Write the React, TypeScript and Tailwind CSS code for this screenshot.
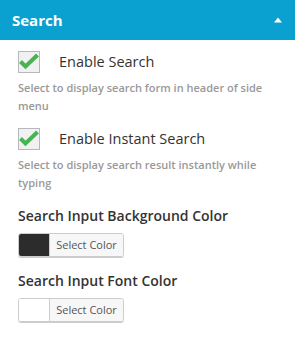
import React from "react";

function Check() {
  return (
    <div className="relative w-[22px] h-[22px] border border-[#b4b9be] bg-[#f1f1f1] shrink-0">
      <svg width="22" height="22" viewBox="0 0 22 22" className="absolute left-[-1px] top-[-1px] overflow-visible">
        <path d="M2.5 10.5 L7.5 15.5 L19.5 4" fill="none" stroke="#46b450" strokeWidth="4" strokeLinecap="butt" strokeLinejoin="miter" />
      </svg>
    </div>
  );
}

function ColorButton({ color }: { color: string }) {
  return (
    <div className="flex h-[24px] w-[106px] border border-[#cccccc] rounded-[3px] overflow-hidden shadow-[0_1px_0_#cccccc]">
      <div className="w-[31px] h-full border-r border-[#cccccc]" style={{ backgroundColor: color }} />
      <div className="flex-1 bg-[#f7f7f7] flex items-center justify-center text-[11px] text-[#555555]">Select Color</div>
    </div>
  );
}

export default function App() {
  return (
    <div className="w-[295px] h-[345px] bg-white font-['Open_Sans',sans-serif]">
      <div className="h-[40px] bg-[#0aa0cf] flex items-center justify-between pl-[12px] pr-[13px]">
        <span className="text-white font-bold text-[15px]">Search</span>
        <svg width="8" height="6" viewBox="0 0 8 6">
          <path d="M0 5.5 L4 0.5 L8 5.5 Z" fill="white" />
        </svg>
      </div>
      <div className="pl-[18px] pt-[11px]">
        <div className="flex items-center">
          <Check />
          <span className="ml-[19px] text-[14.5px] font-medium text-[#333333]">Enable Search</span>
        </div>
        <p className="mt-[6px] text-[11px] font-semibold leading-[18px] text-[#999999]">
          Select to display search form in header of side menu
        </p>
        <div className="flex items-center mt-[13px]">
          <Check />
          <span className="ml-[19px] text-[14.5px] font-medium text-[#333333]">Enable Instant Search</span>
        </div>
        <p className="mt-[6px] text-[11px] font-semibold leading-[18px] text-[#999999] pr-[20px]">
          Select to display search result instantly while typing
        </p>
        <div className="mt-[14px] text-[14px] font-semibold text-[#333333] leading-[20px]">Search Input Background Color</div>
        <div className="mt-[7px]">
          <ColorButton color="#2c2c2c" />
        </div>
        <div className="mt-[14px] text-[14px] font-semibold text-[#333333] leading-[20px]">Search Input Font Color</div>
        <div className="mt-[7px]">
          <ColorButton color="#ffffff" />
        </div>
      </div>
    </div>
  );
}
